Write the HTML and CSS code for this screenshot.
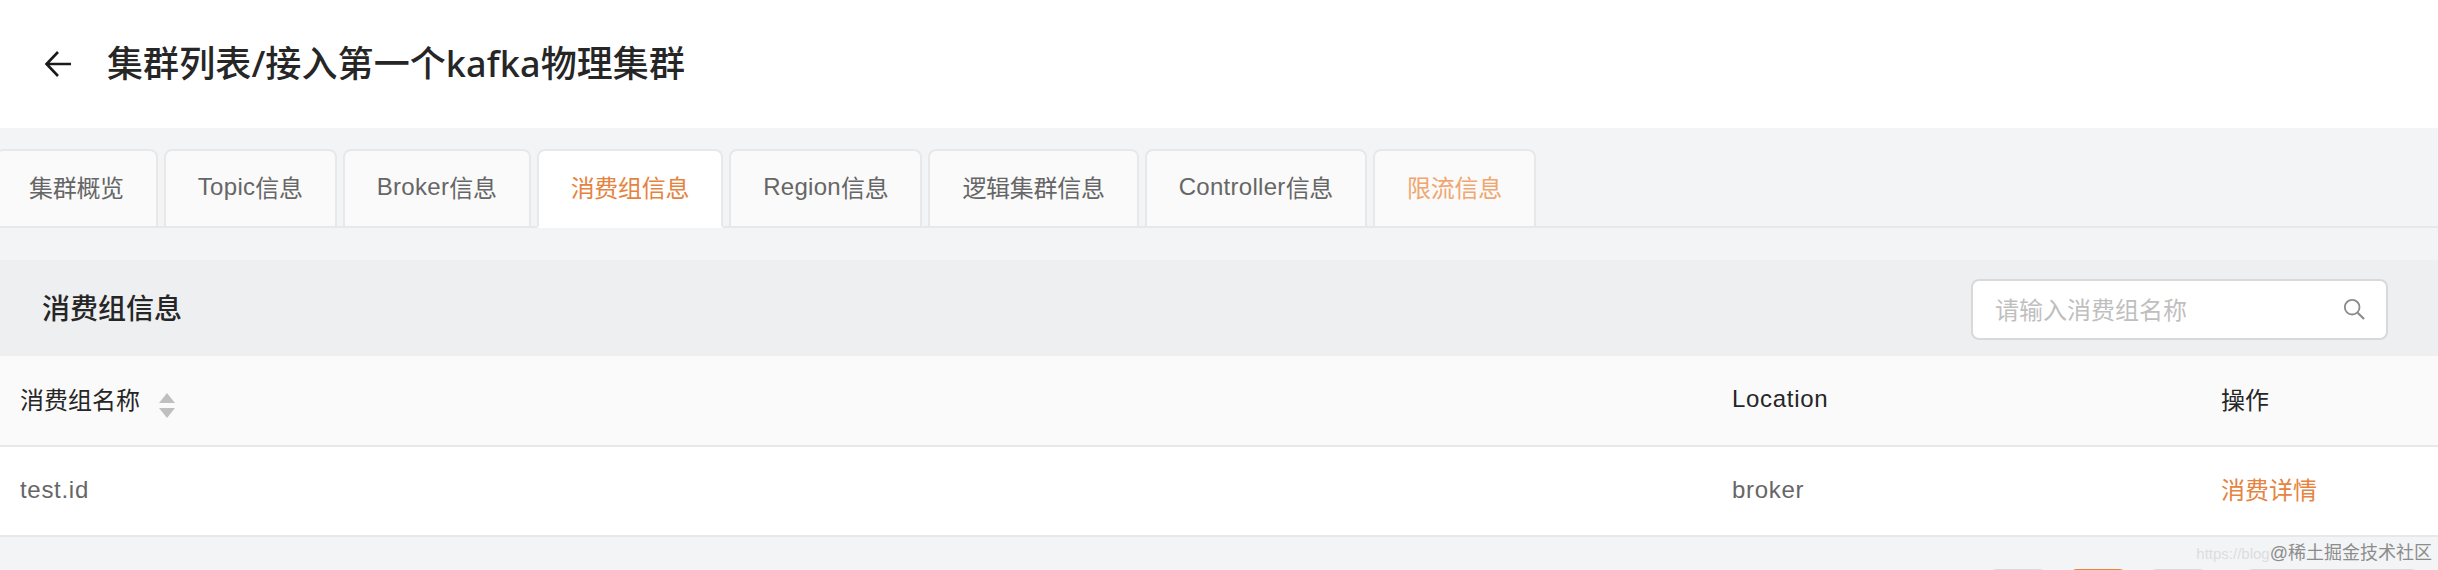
FILE: index.html
```html
<!DOCTYPE html>
<html lang="zh-CN">
<head>
    <meta charset="UTF-8">
    <title>集群列表/接入第一个kafka物理集群</title>
    <link rel="stylesheet" href="styles.css">
</head>
<body>
    <!-- Page header -->
    <div class="page-header">
        <svg class="back-icon" width="28" height="28" viewBox="0 0 28 28" fill="none">
            <path d="M14 2 L2.5 14 L14 26 M2.5 14 H27" stroke="#1a1a1a" stroke-width="2.6"/>
        </svg>
        <h1 class="page-title">集群列表/接入第一个kafka物理集群</h1>
    </div>

    <!-- Tabs -->
    <div class="tabs">
        <div class="tab">集群概览</div>
        <div class="tab"><span class="en">Topic</span>信息</div>
        <div class="tab"><span class="en">Broker</span>信息</div>
        <div class="tab active">消费组信息</div>
        <div class="tab"><span class="en">Region</span>信息</div>
        <div class="tab">逻辑集群信息</div>
        <div class="tab"><span class="en">Controller</span>信息</div>
        <div class="tab limit">限流信息</div>
    </div>

    <!-- Consumer group panel -->
    <div class="panel-head">
        <div class="panel-title">消费组信息</div>
        <div class="search">
            <span class="placeholder">请输入消费组名称</span>
            <svg class="search-icon" width="22" height="22" viewBox="0 0 24 24" fill="none">
                <circle cx="10" cy="10" r="8" stroke="#8c8c8c" stroke-width="2"/>
                <path d="M16 16 L23 23" stroke="#8c8c8c" stroke-width="2.4"/>
            </svg>
        </div>
    </div>

    <table class="table">
        <thead>
            <tr>
                <th class="col-name">
                    <span class="name-head">消费组名称
                        <span class="sorter">
                            <span class="up"></span>
                            <span class="down"></span>
                        </span>
                    </span>
                </th>
                <th class="col-location latin">Location</th>
                <th>操作</th>
            </tr>
        </thead>
        <tbody>
            <tr>
                <td class="col-name latin">test.id</td>
                <td class="latin">broker</td>
                <td><a class="link">消费详情</a></td>
            </tr>
        </tbody>
    </table>

    <!-- Pagination, cut off by the bottom of the screenshot -->
    <div class="pagination">
        <div class="page-btn"></div>
        <div class="page-btn current"></div>
        <div class="page-btn"></div>
        <div class="page-size"></div>
    </div>

    <div class="watermark"><span class="url">https://blog</span>@稀土掘金技术社区</div>
</body>
</html>
```

FILE: styles.css
```css
* {
    margin: 0;
    padding: 0;
    box-sizing: border-box;
}

html, body {
    width: 2438px;
    height: 570px;
    overflow: hidden;
}

body {
    position: relative;
    background: #f3f4f6;
    font-family: "Liberation Sans", "Noto Sans CJK SC", sans-serif;
    font-size: 24px;
    color: #666;
}

.page-header {
    height: 128px;
    background: #fff;
    display: flex;
    align-items: center;
    padding-left: 44px;
    gap: 35px;
}

.back-icon {
    flex: none;
}

.page-title {
    font-family: "Noto Sans", "Noto Sans CJK SC", sans-serif;
    font-size: 36px;
    font-weight: 500;
    color: #262626;
    letter-spacing: 0.1px;
    padding-bottom: 6px;
}

.tabs {
    display: flex;
    gap: 6px;
    margin-top: 21px;
    margin-left: -5px;
    height: 79px;
    border-bottom: 2px solid #e8e8e8;
}

.tab {
    height: 79px;
    padding: 0 32px 4px;
    display: flex;
    align-items: center;
    letter-spacing: -0.3px;
    background: #fafafa;
    border: 2px solid #e8e8e8;
    border-radius: 8px 8px 0 0;
}

.en {
    letter-spacing: 0.3px;
}

.tab.active {
    background: #fff;
    color: #e58341;
    border-bottom-color: #fff;
}

.tab.limit {
    color: #f0a66f;
}

.panel-head {
    height: 96px;
    margin-top: 32px;
    background: #eeeff1;
    display: flex;
    align-items: center;
    justify-content: space-between;
    padding: 0 50px 0 42px;
}

.panel-title {
    font-size: 28px;
    font-weight: 500;
    color: #262626;
    padding-bottom: 2px;
}

.search {
    width: 417px;
    height: 61px;
    margin-top: 3px;
    background: #fff;
    border: 2px solid #d9d9d9;
    border-radius: 8px;
    display: flex;
    align-items: center;
    justify-content: space-between;
    padding: 0 21px 2px 22px;
}

.placeholder {
    color: #bfbfbf;
}

.table {
    width: 100%;
    table-layout: fixed;
    border-collapse: collapse;
    background: #fff;
}

.table th, .table td {
    height: 90px;
    padding-bottom: 5px;
    text-align: left;
    font-weight: 400;
    border-bottom: 2px solid #e8e8e8;
}

.table th {
    background: #fafafa;
    color: #262626;
}

.table .latin {
    padding-bottom: 3px;
    letter-spacing: 0.7px;
}

.col-name {
    width: 1732px;
    padding-left: 20px;
}

.col-location {
    width: 489px;
}

.name-head {
    display: flex;
    align-items: center;
    gap: 19px;
}

.sorter {
    display: flex;
    flex-direction: column;
    gap: 5px;
    margin-top: 15px;
}

.up, .down {
    width: 0;
    height: 0;
    border-left: 8px solid transparent;
    border-right: 8px solid transparent;
}

.up {
    border-bottom: 10px solid #bfbfbf;
}

.down {
    border-top: 10px solid #bfbfbf;
}

.link {
    color: #e58341;
}

.pagination {
    display: flex;
    justify-content: flex-end;
    gap: 22px;
    height: 2px;
    overflow: hidden;
    margin-top: 32px;
    padding-right: 19px;
}

.page-btn {
    flex: none;
    width: 58px;
    height: 58px;
    background: #fff;
    border: 2px solid #d9d9d9;
    border-radius: 8px;
}

.page-btn.current {
    background: #e58341;
    border-color: #e58341;
}

.page-size {
    flex: none;
    width: 174px;
    height: 58px;
    margin-left: 16px;
    background: #fff;
    border: 2px solid #d9d9d9;
    border-radius: 8px;
}

.watermark {
    position: absolute;
    right: 6px;
    bottom: 4px;
    font-size: 18px;
    line-height: 24px;
    color: #8c8c8c;
    white-space: nowrap;
}

.url {
    font-size: 15px;
    color: #dcdde0;
}
```
